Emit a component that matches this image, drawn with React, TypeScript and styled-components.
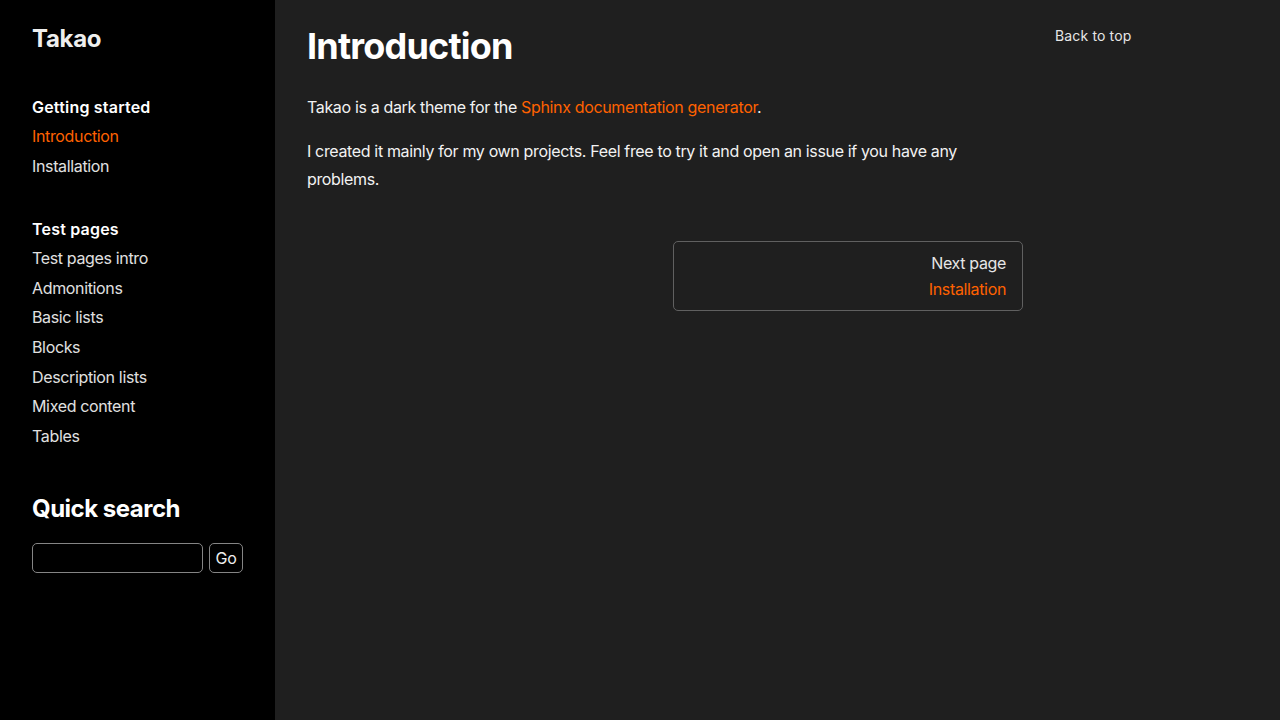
import React from "react";
import styled, { createGlobalStyle } from "styled-components";

const Global = createGlobalStyle`
  html, body { margin: 0; padding: 0; background: #1f1f1f; }
  body { font-family: Inter, "Noto Sans", sans-serif; color: #eeeeee; -webkit-font-smoothing: antialiased; }
  * { box-sizing: border-box; }
`;

const ORANGE = "#ff6200";

const Page = styled.div`
  display: flex;
  min-height: 720px;
  width: 1280px;
`;

const Sidebar = styled.nav`
  width: 275px;
  flex-shrink: 0;
  background: #000000;
  padding: 23px 32px 32px;
  display: flex;
  flex-direction: column;
`;

const Brand = styled.div`
  font-size: 24px;
  font-weight: 700;
  color: #eeeeee;
  line-height: 32px;
  letter-spacing: -0.3px;
  margin-bottom: 38px;
`;

const Section = styled.div`
  display: flex;
  flex-direction: column;
  margin-bottom: 34px;
`;

const SectionTitle = styled.div`
  font-size: 16px;
  font-weight: 600;
  color: #ffffff;
  line-height: 29px;
  letter-spacing: 0.2px;
`;

const NavLink = styled.a<{ $active?: boolean }>`
  font-size: 16px;
  line-height: 29.6px;
  letter-spacing: -0.35px;
  color: ${(p) => (p.$active ? ORANGE : "#e0e0e0")};
  text-decoration: none;
`;

const SearchTitle = styled.h3`
  font-size: 24px;
  font-weight: 700;
  color: #ffffff;
  margin: 8px 0 18px;
  line-height: 32px;
  letter-spacing: -0.5px;
`;

const SearchRow = styled.form`
  display: flex;
  gap: 6px;
`;

const SearchInput = styled.input`
  width: 171px;
  height: 30px;
  background: #000;
  border: 1px solid #858585;
  border-radius: 5px;
  color: #eee;
  font: inherit;
`;

const GoButton = styled.button`
  height: 30px;
  width: 34px;
  background: #000;
  border: 1px solid #858585;
  border-radius: 5px;
  color: #eee;
  font-family: Inter, sans-serif;
  font-size: 16px;
  letter-spacing: -0.3px;
  padding: 0;
`;

const Main = styled.main`
  width: 780px;
  padding: 22px 32px 32px;
  flex-shrink: 0;
`;

const H1 = styled.h1`
  font-size: 36px;
  font-weight: 700;
  line-height: 48px;
  color: #ffffff;
  margin: 0 0 23px;
  letter-spacing: -0.8px;
`;

const P = styled.p`
  font-size: 16px;
  line-height: 28px;
  letter-spacing: -0.35px;
  margin: 0 0 16px;
  color: #f2f2f2;
`;

const Link = styled.a`
  color: ${ORANGE};
  text-decoration: none;
`;

const Pager = styled.div`
  display: grid;
  grid-template-columns: 1fr 1fr;
  gap: 16px;
  margin-top: 48px;
`;

const PagerCard = styled.a`
  grid-column: 2;
  border: 1px solid #606060;
  border-radius: 5px;
  padding: 8px 16px;
  display: flex;
  flex-direction: column;
  align-items: flex-end;
  text-decoration: none;
  height: 70px;
`;

const PagerLabel = styled.span`
  font-size: 16px;
  line-height: 26px;
  letter-spacing: -0.35px;
  color: #e6e6e6;
`;

const PagerTarget = styled.span`
  font-size: 16px;
  line-height: 26px;
  letter-spacing: -0.35px;
  color: ${ORANGE};
`;

const Aside = styled.aside`
  padding: 25px 0 0 0;
`;

const TopLink = styled.a`
  font-size: 14px;
  line-height: 20px;
  letter-spacing: 0.15px;
  color: #e6e6e6;
  text-decoration: none;
`;

export default function App() {
  return (
    <>
      <Global />
      <Page>
        <Sidebar>
          <Brand>Takao</Brand>
          <Section>
            <SectionTitle>Getting started</SectionTitle>
            <NavLink $active>Introduction</NavLink>
            <NavLink>Installation</NavLink>
          </Section>
          <Section>
            <SectionTitle>Test pages</SectionTitle>
            <NavLink>Test pages intro</NavLink>
            <NavLink>Admonitions</NavLink>
            <NavLink>Basic lists</NavLink>
            <NavLink>Blocks</NavLink>
            <NavLink>Description lists</NavLink>
            <NavLink>Mixed content</NavLink>
            <NavLink>Tables</NavLink>
          </Section>
          <SearchTitle>Quick search</SearchTitle>
          <SearchRow onSubmit={(e) => e.preventDefault()}>
            <SearchInput type="text" />
            <GoButton type="submit">Go</GoButton>
          </SearchRow>
        </Sidebar>
        <Main>
          <H1>Introduction</H1>
          <P>
            Takao is a dark theme for the <Link>Sphinx documentation generator</Link>.
          </P>
          <P>
            I created it mainly for my own projects. Feel free to try it and open an issue if you have any problems.
          </P>
          <Pager>
            <PagerCard>
              <PagerLabel>Next page</PagerLabel>
              <PagerTarget>Installation</PagerTarget>
            </PagerCard>
          </Pager>
        </Main>
        <Aside>
          <TopLink>Back to top</TopLink>
        </Aside>
      </Page>
    </>
  );
}
